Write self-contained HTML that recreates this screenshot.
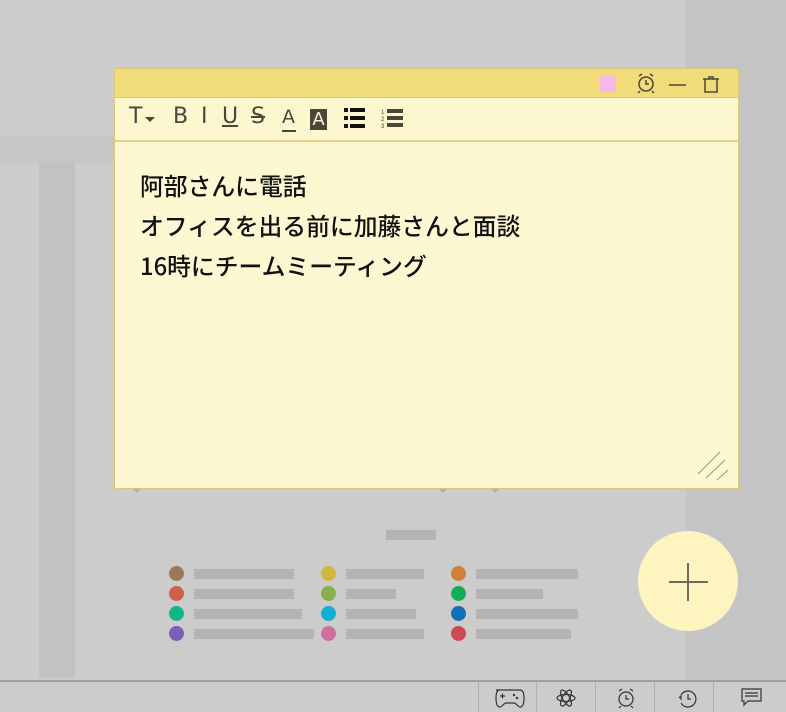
<!DOCTYPE html>
<html><head><meta charset="utf-8"><style>
*{margin:0;padding:0;box-sizing:border-box}
body{width:786px;height:712px;background:#cccccc;position:relative;overflow:hidden;font-family:"Liberation Sans","Noto Sans CJK JP",sans-serif}
.a{position:absolute}
.dot{position:absolute;width:15px;height:15px;border-radius:50%}
.bar{position:absolute;height:10px;background:#b4b4b4}
.tb{position:absolute;top:104px;font-size:22px;color:#4a463a;font-family:"DejaVu Sans","Liberation Sans",sans-serif;font-weight:400}
.sep{position:absolute;top:682px;width:1px;height:30px;background:#b0b0b0}
</style></head><body>
<div class="a" style="left:0;top:136px;width:686px;height:27px;background:#c6c6c6"></div>
<div class="a" style="left:39px;top:163px;width:36px;height:514px;background:#c2c2c2"></div>
<div class="a" style="left:686px;top:0;width:100px;height:680px;background:#c4c4c4"></div>
<div class="a" style="left:386px;top:530px;width:50px;height:10px;background:#b4b4b4"></div>
<div class="a" style="left:132px;top:488px;border:5px solid transparent;border-top-color:#b0b0b0"></div>
<div class="a" style="left:438px;top:488px;border:5px solid transparent;border-top-color:#b0b0b0"></div>
<div class="a" style="left:490px;top:488px;border:5px solid transparent;border-top-color:#b0b0b0"></div>

<div class="dot" style="left:169px;top:566px;background:#a07858"></div><div class="bar" style="left:194px;top:569px;width:100px"></div>
<div class="dot" style="left:169px;top:586px;background:#d06048"></div><div class="bar" style="left:194px;top:589px;width:100px"></div>
<div class="dot" style="left:169px;top:606px;background:#10b888"></div><div class="bar" style="left:194px;top:609px;width:108px"></div>
<div class="dot" style="left:169px;top:626px;background:#7860b8"></div><div class="bar" style="left:194px;top:629px;width:120px"></div>
<div class="dot" style="left:321px;top:566px;background:#d0b840"></div><div class="bar" style="left:346px;top:569px;width:78px"></div>
<div class="dot" style="left:321px;top:586px;background:#88b048"></div><div class="bar" style="left:346px;top:589px;width:50px"></div>
<div class="dot" style="left:321px;top:606px;background:#10b0d0"></div><div class="bar" style="left:346px;top:609px;width:70px"></div>
<div class="dot" style="left:321px;top:626px;background:#d070a0"></div><div class="bar" style="left:346px;top:629px;width:78px"></div>
<div class="dot" style="left:451px;top:566px;background:#d08038"></div><div class="bar" style="left:476px;top:569px;width:102px"></div>
<div class="dot" style="left:451px;top:586px;background:#10b058"></div><div class="bar" style="left:476px;top:589px;width:67px"></div>
<div class="dot" style="left:451px;top:606px;background:#1070b8"></div><div class="bar" style="left:476px;top:609px;width:102px"></div>
<div class="dot" style="left:451px;top:626px;background:#d04850"></div><div class="bar" style="left:476px;top:629px;width:95px"></div>

<div class="a" style="left:638px;top:531px;width:100px;height:100px;border-radius:50%;background:#fdf4c0"></div>
<div class="a" style="left:669px;top:581px;width:39px;height:2px;background:#706a5a"></div>
<div class="a" style="left:687px;top:563px;width:2px;height:38px;background:#706a5a"></div>

<div class="a" style="left:0;top:680px;width:786px;height:2px;background:#a0a0a0"></div>
<div class="sep" style="left:478px"></div><div class="sep" style="left:536px"></div><div class="sep" style="left:595px"></div><div class="sep" style="left:654px"></div><div class="sep" style="left:713px"></div>
<svg class="a" style="left:0;top:682px" width="786" height="30" fill="none" stroke="#333" stroke-width="1.2">
<path d="M496 8h24c3 0 4 3 4 8s-1 9-4 9c-2 0-4-4-6-4h-8c-2 0-4 4-6 4-3 0-4-4-4-9s1-8 4-8z"/><path d="M500 14h5M502.5 11.5v5"/><circle cx="514" cy="13" r=".6"/><circle cx="517" cy="16" r=".6"/>
<ellipse cx="566" cy="16" rx="9" ry="3.5"/><ellipse cx="566" cy="16" rx="9" ry="3.5" transform="rotate(60 566 16)"/><ellipse cx="566" cy="16" rx="9" ry="3.5" transform="rotate(-60 566 16)"/>
<circle cx="626" cy="17" r="7"/><path d="M626 13v4h3M619 9l3-2M633 9l-3-2M621 24l-2 2M631 24l2 2"/>
<path d="M681 13a8 8 0 1 1 0 8"/><path d="M688 12v5h3M681 18v-4l-2 2"/>
<path d="M742 7h19v12h-13l-4 4v-4h-2z"/><path d="M745 11h13M745 14h13"/>
</svg>

<div class="a" style="left:114px;top:68px;width:625px;height:421px;background:#fdf8d2;border:1px solid #d8c878"></div>
<div class="a" style="left:115px;top:69px;width:623px;height:29px;background:#f0dc78;border-bottom:1px solid #d8c878"></div>
<div class="a" style="left:115px;top:98px;width:623px;height:44px;background:#fdf7d0;border-bottom:2px solid #e2d28a"></div>
<div class="a" style="left:600px;top:75px;width:16px;height:17px;background:#f8b8e8"></div>
<svg class="a" style="left:630px;top:70px" width="100" height="28" fill="none" stroke="#4a463a" stroke-width="1.5">
<circle cx="16" cy="14" r="7"/><path d="M16 10v4h3M9 6l3-2M23 6l-3-2M10 21l-2 2M22 21l2 2"/>
<path d="M39 15h17"/>
<path d="M73 9h16M79 9V7h4v2M75 9v13h12V9"/>
</svg>
<div class="tb" style="left:129px">T</div>
<div class="a" style="left:145px;top:117px;border:5px solid transparent;border-top:5px solid #4a463a;border-bottom:0"></div>
<div class="tb" style="left:173px">B</div>
<div class="tb" style="left:201px">I</div>
<div class="tb" style="left:222px;text-decoration:underline">U</div>
<div class="tb" style="left:251px;text-decoration:line-through">S</div>
<div class="tb" style="left:282px;font-size:19px;top:106px">A</div>
<div class="a" style="left:282px;top:130px;width:14px;height:2px;background:#4a463a"></div>
<div class="a" style="left:310px;top:109px;width:17px;height:21px;background:#4a463a;color:#fdf7d0;font-size:18px;text-align:center;line-height:21px;font-family:'DejaVu Sans',sans-serif">A</div>
<svg class="a" style="left:344px;top:107px" width="70" height="26" fill="#111">
<rect x="0" y="1" width="4" height="4"/><rect x="6" y="1" width="15" height="4"/>
<rect x="0" y="9" width="4" height="4"/><rect x="6" y="9" width="15" height="4"/>
<rect x="0" y="17" width="4" height="4"/><rect x="6" y="17" width="15" height="4"/>
<g fill="#4a463a"><rect x="43" y="2" width="16" height="4"/><rect x="43" y="9" width="16" height="4"/><rect x="43" y="16" width="16" height="4"/>
<text x="37" y="7" font-size="6" font-family="Liberation Sans">1</text><text x="37" y="14" font-size="6" font-family="Liberation Sans">2</text><text x="37" y="21" font-size="6" font-family="Liberation Sans">3</text></g>
</svg>
<div class="a" style="left:140px;top:165px;font-size:23.8px;line-height:40px;color:#111;font-weight:500;white-space:nowrap;font-family:'Noto Sans CJK JP',sans-serif">阿部さんに電話<br>オフィスを出る前に加藤さんと面談<br>16時にチームミーティング</div>
<svg class="a" style="left:695px;top:448px" width="38" height="34" stroke="#9a9680" stroke-width="1">
<path d="M3 26L25 4M11 30L30 12M22 32L33 22"/>
</svg>
</body></html>
